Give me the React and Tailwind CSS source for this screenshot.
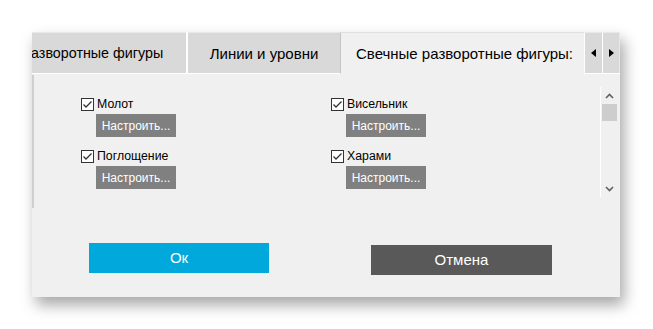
import React from "react";

function Check() {
  return (
    <svg width="13" height="13" viewBox="0 0 13 13" className="shrink-0">
      <rect x="0.5" y="0.5" width="12" height="12" fill="#ffffff" stroke="#333333" />
      <polyline points="2.5,6.5 5,9 10.5,3.5" fill="none" stroke="#333333" strokeWidth="1.3" />
    </svg>
  );
}

function Item({ label }) {
  return (
    <div className="flex flex-col">
      <div className="flex items-center h-[16px] gap-[3px]">
        <Check />
        <span className="text-[12.3px] text-black leading-none">{label}</span>
      </div>
      <div className="ml-[15px] mt-[2px] w-[80px] h-[23px] bg-[#808080] text-white text-[12px] flex items-center justify-center">
        Настроить...
      </div>
    </div>
  );
}

export default function App() {
  return (
    <div
      className="w-[653px] h-[329px] bg-white overflow-hidden pt-[32px] pl-[32px]"
      style={{ fontFamily: '"Liberation Sans", Arial, sans-serif' }}
    >
      <div className="w-[588px] h-[265px] bg-[#f0f0f0] shadow-[4px_8px_14px_rgba(0,0,0,0.35)] flex flex-col">
        {/* Tab strip */}
        <div className="flex h-[43px] shrink-0 text-[15px] text-black">
          <div className="w-[154px] h-[42px] bg-[#d9d9d9] border-t border-[#e8e8e8] border-b border-b-white overflow-hidden flex items-center pt-[2px] text-[14.3px]">
            <span className="whitespace-nowrap -ml-[10px]">Разворотные фигуры</span>
          </div>
          <div className="w-[2px] h-[42px] bg-white" />
          <div className="w-[153px] h-[42px] bg-[#d9d9d9] border-t border-[#e8e8e8] border-b border-b-white border-r border-r-[#c4c4c4] flex items-center justify-center pt-[2px]">
            <span className="whitespace-nowrap">Линии и уровни</span>
          </div>
          <div className="w-[244px] h-[43px] bg-[#f0f0f0] border-t border-[#e0e0e0] border-r border-r-white flex items-center pl-[15px] pt-[1px]">
            <span className="whitespace-nowrap">Свечные разворотные фигуры:</span>
          </div>
          <div className="flex h-[42px] border-b border-white">
            <div className="w-[18px] h-full bg-[#d9d9d9] border-t border-[#e8e8e8] border-r border-r-white flex items-center justify-center">
              <svg width="6" height="8" viewBox="0 0 6 8"><polygon points="5,0 5,8 0,4" fill="#000" /></svg>
            </div>
            <div className="w-[17px] h-full bg-[#d9d9d9] border-t border-[#e8e8e8] border-r border-r-[#e8e8e8] flex items-center justify-center">
              <svg width="6" height="8" viewBox="0 0 6 8"><polygon points="1,0 1,8 6,4" fill="#000" /></svg>
            </div>
          </div>
        </div>

        {/* Panel */}
        <div className="h-[133px] shrink-0 flex border-l-2 border-[#cfcfcf]">
          <div className="flex-1 flex pt-[21px] pl-[47px]">
            <div className="w-[250px] flex flex-col gap-[11px]">
              <Item label="Молот" />
              <Item label="Поглощение" />
            </div>
            <div className="flex flex-col gap-[11px]">
              <Item label="Висельник" />
              <Item label="Харами" />
            </div>
          </div>
          <div className="w-[17px] mt-[12px] mb-[11px] mr-[3px] border-l border-white flex flex-col items-center">
            <div className="h-[17px] w-full flex items-center justify-center">
              <svg width="9" height="6" viewBox="0 0 9 6"><polyline points="1,5 4.5,1.5 8,5" fill="none" stroke="#606060" strokeWidth="1.6" /></svg>
            </div>
            <div className="w-[15px] h-[17px] bg-[#cdcdcd]" />
            <div className="flex-1" />
            <div className="h-[17px] w-full flex items-center justify-center">
              <svg width="9" height="6" viewBox="0 0 9 6"><polyline points="1,1 4.5,4.5 8,1" fill="none" stroke="#606060" strokeWidth="1.6" /></svg>
            </div>
          </div>
        </div>

        {/* Footer */}
        <div className="flex-1 flex items-start pt-[35px] pl-[57px]">
          <div className="w-[180px] h-[30px] bg-[#00a8db] text-white text-[15px] flex items-center justify-center">
            Ок
          </div>
          <div className="ml-[102px] mt-[2px] w-[181px] h-[30px] bg-[#595959] text-white text-[15px] flex items-center justify-center">
            Отмена
          </div>
        </div>
      </div>
    </div>
  );
}
